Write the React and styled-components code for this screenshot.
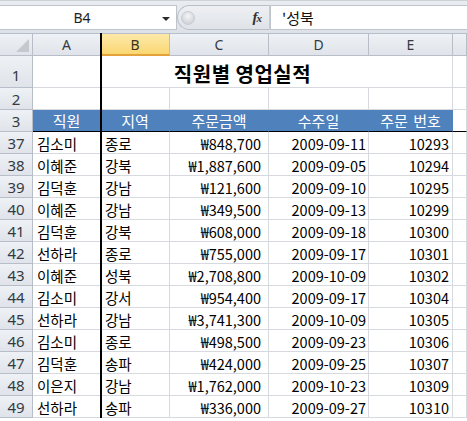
import React from 'react';
import styled, { createGlobalStyle, css } from 'styled-components';

const GlobalStyle = createGlobalStyle`
    html, body {
        margin: 0;
        padding: 0;
        background: #ffffff;
        overflow: hidden;
    }
    body {
        font-family: "Noto Sans CJK KR", "Noto Sans", sans-serif;
    }
`;

const COLUMNS = '33px 68px 69px 99px 100px 84px 1fr';
const GRID = '#d6d9de';
const HEAD_LINE = '#b8bec7';

const Window = styled.div`
    width: 467px;
    height: 421px;
    overflow: hidden;
    background: #ffffff;
`;

/* formula bar */

const FormulaBar = styled.div`
    height: 33px;
    box-sizing: border-box;
    display: flex;
    align-items: stretch;
    padding: 4px 0 3px 0;
    background: linear-gradient(#e9ecf0, #dde2e8);
    border-top: 1px solid #cdd2d9;
`;

const NameBox = styled.div`
    width: 177px;
    box-sizing: border-box;
    display: grid;
    grid-template-columns: 1fr 14px;
    align-items: center;
    background: #ffffff;
    border: 1px solid #bfc5cd;
    border-left: none;
    font-family: "Noto Sans", sans-serif;
    font-size: 14px;
    color: #1e1e1e;
`;

const NameText = styled.span`
    text-align: center;
    padding-left: 2px;
`;

const DropArrow = styled.span`
    width: 0;
    height: 0;
    border-left: 4px solid transparent;
    border-right: 4px solid transparent;
    border-top: 4px solid #2b2b2b;
    margin-top: 2px;
`;

const Splitter = styled.div`
    width: 93px;
    box-sizing: border-box;
    display: flex;
    align-items: center;
    justify-content: space-between;
    padding: 0 8px 0 3px;
    border: 1px solid #b9bfc7;
    border-right: 1px solid #c7ccd3;
    border-radius: 13px 0 0 13px;
    background: linear-gradient(#eef0f3, #dfe3e8);
`;

const Knob = styled.span`
    width: 12px;
    height: 12px;
    border-radius: 50%;
    background: radial-gradient(circle at 50% 35%, #f4f5f7, #c3c8cf);
    border: 1px solid #c9cdd3;
`;

const Fx = styled.span`
    font-family: "Liberation Serif", serif;
    font-style: italic;
    font-weight: bold;
    font-size: 15px;
    color: #333333;
    letter-spacing: -1px;

    small {
        font-size: 11px;
    }
`;

const FormulaInput = styled.div`
    flex: 1;
    display: flex;
    align-items: center;
    padding-left: 11px;
    background: #ffffff;
    border: 1px solid #bfc5cd;
    border-right: none;
    font-size: 15px;
    color: #111111;
`;

/* sheet */

const Sheet = styled.div`
    position: relative;
`;

const FreezeColumn = styled.div`
    position: absolute;
    left: 100px;
    top: 0;
    bottom: 0;
    width: 2px;
    background: #000000;
`;

const Row = styled.div`
    display: grid;
    grid-template-columns: ${COLUMNS};
    height: ${p => p.$h || 22}px;
`;

const headerCell = css`
    box-sizing: border-box;
    display: flex;
    align-items: center;
    justify-content: center;
    background: linear-gradient(#eef1f5, #e0e4ea);
    border-right: 1px solid ${HEAD_LINE};
    border-bottom: 1px solid ${HEAD_LINE};
    color: #333a44;
    font-family: "Noto Sans", sans-serif;
    font-size: 14px;
`;

const Corner = styled.div`
    ${headerCell};
    position: relative;
    border-top: 1px solid ${HEAD_LINE};

    &::after {
        content: "";
        position: absolute;
        right: 3px;
        bottom: 3px;
        border-left: 13px solid transparent;
        border-bottom: 13px solid #c4c9d0;
    }
`;

const ColHead = styled.div`
    ${headerCell};
    border-top: 1px solid ${HEAD_LINE};
    ${p => p.$active && css`
        background: linear-gradient(#fde9a9, #f9d772);
        border-bottom: 2px solid #e3a23a;
        color: #3a3320;
    `}
`;

const RowHead = styled.div`
    ${headerCell};
    align-items: ${p => (p.$bottom ? 'flex-end' : 'center')};
    padding-bottom: ${p => (p.$bottom ? 2 : 0)}px;
    font-size: 15px;
`;

const Cell = styled.div`
    box-sizing: border-box;
    display: flex;
    align-items: center;
    justify-content: ${p => p.$align || 'flex-start'};
    padding: 1px ${p => p.$pr ?? 3}px 0 4px;
    border-right: 1px solid ${GRID};
    border-bottom: 1px solid ${GRID};
    font-size: 14.5px;
    color: #000000;
    white-space: nowrap;
    overflow: hidden;
    ${p => p.$edge && css`border-bottom-color: #000000;`}
`;

const Title = styled(Cell)`
    grid-column: 2 / 7;
    justify-content: center;
    padding: 3px 0 0 0;
    font-size: 20px;
    font-weight: bold;
    letter-spacing: 0.5px;
`;

const HeadCell = styled(Cell)`
    justify-content: center;
    background: #4f81bd;
    border-right-color: #4f81bd;
    border-bottom-color: #000000;
    color: #ffffff;
    font-size: 15px;
    padding: 0;
    word-spacing: 2px;
`;

const HEADERS = ['직원', '지역', '주문금액', '수주일', '주문 번호'];

const DATA = [
    [37, '김소미', '종로', '₩848,700', '2009-09-11', 10293],
    [38, '이혜준', '강북', '₩1,887,600', '2009-09-05', 10294],
    [39, '김덕훈', '강남', '₩121,600', '2009-09-10', 10295],
    [40, '이혜준', '강남', '₩349,500', '2009-09-13', 10299],
    [41, '김덕훈', '강북', '₩608,000', '2009-09-18', 10300],
    [42, '선하라', '종로', '₩755,000', '2009-09-17', 10301],
    [43, '이혜준', '성북', '₩2,708,800', '2009-10-09', 10302],
    [44, '김소미', '강서', '₩954,400', '2009-09-17', 10304],
    [45, '선하라', '강남', '₩3,741,300', '2009-10-09', 10305],
    [46, '김소미', '종로', '₩498,500', '2009-09-23', 10306],
    [47, '김덕훈', '송파', '₩424,000', '2009-09-25', 10307],
    [48, '이은지', '강남', '₩1,762,000', '2009-10-23', 10309],
    [49, '선하라', '송파', '₩336,000', '2009-09-27', 10310],
];

const App = () => (
    <Window>
        <GlobalStyle />
        <FormulaBar>
            <NameBox>
                <NameText>B4</NameText>
                <DropArrow />
            </NameBox>
            <Splitter>
                <Knob />
                <Fx>f<small>x</small></Fx>
            </Splitter>
            <FormulaInput>'성북</FormulaInput>
        </FormulaBar>

        <Sheet>
            <Row $h={23}>
                <Corner />
                {['A', 'B', 'C', 'D', 'E', ''].map((c) => (
                    <ColHead key={c} $active={c === 'B'}>{c}</ColHead>
                ))}
            </Row>

            <Row $h={32}>
                <RowHead $bottom>1</RowHead>
                <Title>직원별 영업실적</Title>
                <Cell />
            </Row>

            <Row>
                <RowHead>2</RowHead>
                <Cell /><Cell /><Cell /><Cell /><Cell /><Cell />
            </Row>

            <Row>
                <RowHead>3</RowHead>
                {HEADERS.map((h) => <HeadCell key={h}>{h}</HeadCell>)}
                <Cell $edge />
            </Row>

            {DATA.map(([n, name, area, amount, date, no]) => (
                <Row key={n}>
                    <RowHead>{n}</RowHead>
                    <Cell>{name}</Cell>
                    <Cell>{area}</Cell>
                    <Cell $align="flex-end" $pr={7}>{amount}</Cell>
                    <Cell $align="flex-end" $pr={2}>{date}</Cell>
                    <Cell $align="flex-end" $pr={3}>{no}</Cell>
                    <Cell />
                </Row>
            ))}

            <FreezeColumn />
        </Sheet>
    </Window>
);

export default App;
